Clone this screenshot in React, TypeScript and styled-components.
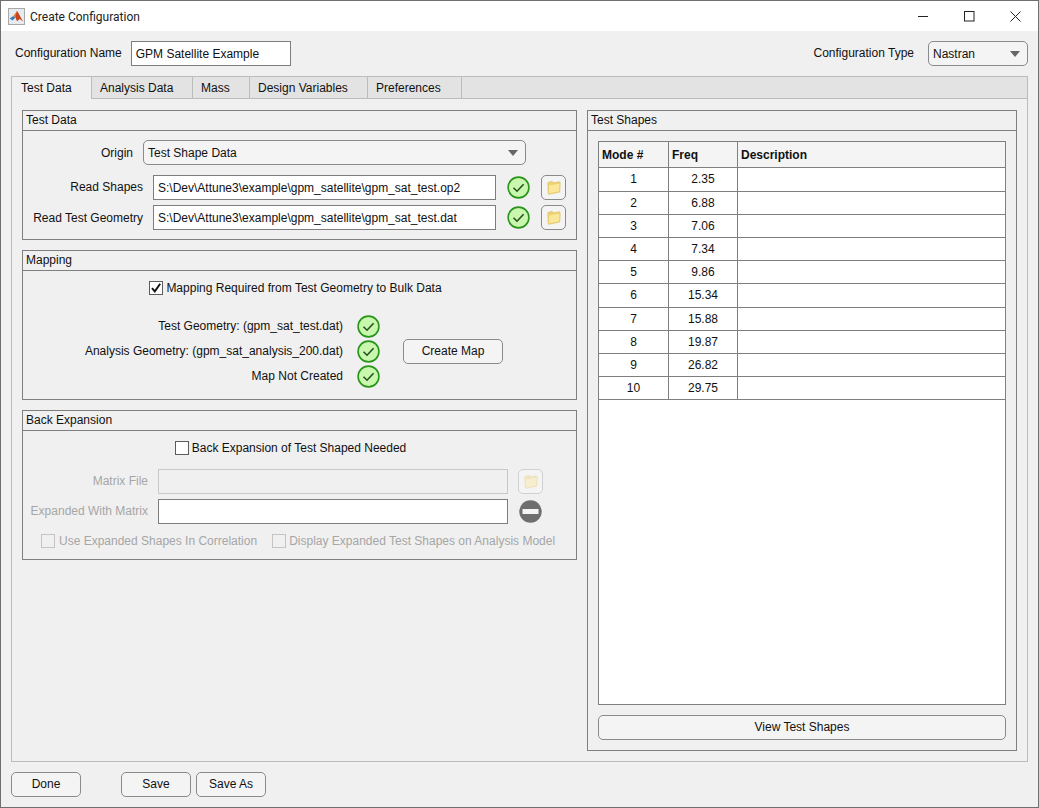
import React from "react";
import styled, { createGlobalStyle } from "styled-components";

const GlobalStyle = createGlobalStyle`
  html, body {
    margin: 0;
    padding: 0;
    background: #f0f0f0;
  }
  * {
    box-sizing: border-box;
  }
`;

const Window = styled.div`
  width: 1039px;
  height: 808px;
  border: 1px solid #6f6f6f;
  background: #f0f0f0;
  display: flex;
  flex-direction: column;
  font-family: "Liberation Sans", Arial, sans-serif;
  font-size: 12px;
  color: #111;
  overflow: hidden;
`;

const TitleBar = styled.div`
  height: 30px;
  flex: none;
  background: #fff;
  display: flex;
  align-items: center;
  padding-left: 7px;
  gap: 5px;
`;

const TitleText = styled.div`
  flex: 1;
  padding-top: 2px;
  font-family: Roboto, sans-serif;
  font-size: 12px;
  color: #222;
`;

const WinControls = styled.div`
  display: flex;
  height: 100%;
`;

const WinButton = styled.div`
  width: 46px;
  height: 100%;
  display: flex;
  align-items: center;
  justify-content: center;
`;

const Content = styled.div`
  flex: 1;
  display: flex;
  flex-direction: column;
  padding: 10px;
`;

const ConfigRow = styled.div`
  height: 25px;
  flex: none;
  display: flex;
  align-items: center;
  padding-left: 4px;
  margin-bottom: 10px;
`;

const ConfigLabel = styled.span<{ $gap: number }>`
  margin-right: ${(p) => p.$gap}px;
  padding-bottom: 2px;
  white-space: nowrap;
`;

const Spacer = styled.div`
  flex: 1;
`;

const TextField = styled.div<{ $width: number; $disabled?: boolean }>`
  width: ${(p) => p.$width}px;
  height: 25px;
  flex: none;
  border: 1px solid ${(p) => (p.$disabled ? "#c8c8c8" : "#7d7d7d")};
  background: ${(p) => (p.$disabled ? "#f0f0f0" : "#fff")};
  display: flex;
  align-items: center;
  padding-left: 4px;
  white-space: nowrap;
`;

const DropDown = styled.div<{ $width: number }>`
  width: ${(p) => p.$width}px;
  height: 25px;
  flex: none;
  border: 1px solid #8a8a8a;
  border-radius: 5px;
  background: #f4f4f4;
  display: flex;
  align-items: center;
  justify-content: space-between;
  padding: 0 5px 0 4px;
`;

const Caret = styled.span`
  width: 0;
  height: 0;
  margin-right: 2px;
  border-left: 5px solid transparent;
  border-right: 5px solid transparent;
  border-top: 6px solid #666;
`;

const TabGroup = styled.div`
  height: 686px;
  flex: none;
  border: 1px solid #bcbcbc;
  display: flex;
  flex-direction: column;
`;

const TabStrip = styled.div`
  height: 22px;
  flex: none;
  display: flex;
  background: #e3e3e3;
  border-bottom: 1px solid #bcbcbc;
`;

const Tab = styled.div<{ $width: number; $active?: boolean }>`
  width: ${(p) => p.$width}px;
  height: ${(p) => (p.$active ? "22px" : "21px")};
  flex: none;
  display: flex;
  align-items: center;
  padding-left: ${(p) => (p.$active ? 9 : 8)}px;
  background: ${(p) => (p.$active ? "#f0f0f0" : "transparent")};
  border-right: 1px solid #bcbcbc;
  position: relative;
  z-index: ${(p) => (p.$active ? 1 : 0)};
`;

const TabBody = styled.div`
  flex: 1;
  display: flex;
  gap: 10px;
  padding: 11px 10px 10px 10px;
`;

const LeftColumn = styled.div`
  width: 555px;
  flex: none;
  display: flex;
  flex-direction: column;
  gap: 10px;
`;

const Panel = styled.div<{ $height?: number; $fill?: boolean }>`
  border: 1px solid #7f7f7f;
  display: flex;
  flex-direction: column;
  ${(p) => (p.$height ? `height: ${p.$height}px;` : "")}
  ${(p) => (p.$fill ? "width: 430px; flex: none;" : "")}
`;

const PanelTitle = styled.div`
  height: 20px;
  flex: none;
  padding: 0 0 2px 3px;
  display: flex;
  align-items: center;
  border-bottom: 1px solid #7f7f7f;
`;

const PanelBody = styled.div<{ $top: number; $gap?: number }>`
  flex: 1;
  display: flex;
  flex-direction: column;
  padding-top: ${(p) => p.$top}px;
  gap: ${(p) => p.$gap ?? 0}px;
  min-height: 0;
`;

const FormRow = styled.div<{ $labelWidth: number; $after?: number }>`
  display: grid;
  grid-template-columns: ${(p) => p.$labelWidth}px auto auto auto;
  justify-content: start;
  align-items: center;
  height: 25px;
  margin-bottom: ${(p) => p.$after ?? 0}px;
`;

const FieldLabel = styled.div<{ $disabled?: boolean; $gap: number; $level?: boolean }>`
  text-align: right;
  padding-right: ${(p) => p.$gap}px;
  padding-bottom: ${(p) => (p.$level ? 0 : 2)}px;
  white-space: nowrap;
  color: ${(p) => (p.$disabled ? "#a6a6a6" : "inherit")};
`;

const StatusSlot = styled.div`
  width: 45px;
  height: 25px;
  display: flex;
  align-items: center;
  padding-left: 11px;
`;

const FieldGap = styled.div<{ $width: number }>`
  width: ${(p) => p.$width}px;
`;

const IconButton = styled.div<{ $disabled?: boolean }>`
  width: 25px;
  height: 25px;
  border: 1px solid ${(p) => (p.$disabled ? "#d0d0d0" : "#8a8a8a")};
  border-radius: 5px;
  background: #f4f4f4;
  display: flex;
  align-items: center;
  justify-content: center;
`;

const CenterRow = styled.div<{ $inset: number; $after?: number }>`
  height: 20px;
  display: flex;
  align-items: center;
  justify-content: center;
  gap: 3px;
  padding-right: ${(p) => p.$inset}px;
  margin-bottom: ${(p) => p.$after ?? 0}px;
`;

const CheckBox = styled.span<{ $disabled?: boolean }>`
  width: 14px;
  height: 14px;
  flex: none;
  border: 1px solid ${(p) => (p.$disabled ? "#c4c4c4" : "#5c5c5c")};
  background: ${(p) => (p.$disabled ? "#f0f0f0" : "#fff")};
  display: flex;
  align-items: center;
  justify-content: center;
`;

const MapArea = styled.div`
  display: flex;
  align-items: center;
  margin-top: 16px;
`;

const MapList = styled.div`
  display: flex;
  flex-direction: column;
`;

const MapRow = styled.div`
  width: 357px;
  height: 25px;
  display: grid;
  grid-template-columns: 320px 37px;
  align-items: center;
`;

const MapLabel = styled.div`
  text-align: right;
  white-space: nowrap;
  padding-bottom: 2px;
`;

const MapIcon = styled.div`
  display: flex;
  justify-content: flex-end;
`;

const PushButton = styled.div<{ $width?: number; $left?: number }>`
  width: ${(p) => (p.$width ? `${p.$width}px` : "auto")};
  height: 25px;
  flex: none;
  margin-left: ${(p) => p.$left ?? 0}px;
  padding-bottom: 2px;
  border: 1px solid #8a8a8a;
  border-radius: 5px;
  background: #f4f4f4;
  display: flex;
  align-items: center;
  justify-content: center;
`;

const OptionRow = styled.div`
  display: flex;
  align-items: center;
  height: 20px;
  margin-top: 2px;
  padding-left: 18px;
  color: #a6a6a6;
`;

const OptionLabel = styled.span<{ $gap: number; $lead: number }>`
  margin-left: ${(p) => p.$lead}px;
  margin-right: ${(p) => p.$gap}px;
  white-space: nowrap;
`;

const TableWrap = styled.div`
  flex: 1;
  margin: 10px 10px 0 10px;
  border: 1px solid #7f7f7f;
  background: #fff;
  display: flex;
  flex-direction: column;
  min-height: 0;
`;

const TableRow = styled.div<{ $head?: boolean }>`
  height: ${(p) => (p.$head ? "26.4px" : "23.2px")};
  flex: none;
  display: grid;
  grid-template-columns: 70px 69px 1fr;
  border-bottom: 1px solid #7f7f7f;
  background: ${(p) => (p.$head ? "#f4f4f4" : "#fff")};
  font-weight: ${(p) => (p.$head ? 700 : 400)};
`;

const TableCell = styled.div<{ $center?: boolean; $head?: boolean }>`
  display: flex;
  align-items: center;
  justify-content: ${(p) => (p.$center ? "center" : "flex-start")};
  padding-left: ${(p) => (p.$head ? 3 : 0)}px;
  padding-top: ${(p) => (p.$head ? 1 : 0)}px;
  border-right: 1px solid #7f7f7f;
  &:last-child {
    border-right: none;
  }
`;

const TableFooter = styled.div`
  padding: 10px;
  flex: none;
`;

const BottomBar = styled.div`
  flex: none;
  display: flex;
  margin-top: 10px;
`;

const TEST_SHAPES = [
  ["1", "2.35"],
  ["2", "6.88"],
  ["3", "7.06"],
  ["4", "7.34"],
  ["5", "9.86"],
  ["6", "15.34"],
  ["7", "15.88"],
  ["8", "19.87"],
  ["9", "26.82"],
  ["10", "29.75"],
];

const CheckCircle = () => (
  <svg width="23" height="23" viewBox="0 0 23 23">
    <circle cx="11.5" cy="11.5" r="10.4" fill="#c9f7ae" stroke="#2a941b" strokeWidth="1.6" />
    <path d="M6.5 11.8 L10 15.2 L16.6 8.2" fill="none" stroke="#24501d" strokeWidth="1.6" />
  </svg>
);

const FolderIcon = ({ faded }: { faded?: boolean }) => (
  <svg width="14" height="15" viewBox="0 0 14 15" opacity={faded ? 0.4 : 1}>
    <path
      d="M0.8 2.6 L5 1.2 L6.6 2.8 L12.2 1.8 Q13.2 1.8 13.2 2.8 L12.9 11.2 Q12.9 12 12.1 12.2 L2.2 14.3 Q1.2 14.4 1.2 13.4 Z"
      fill="#efd171"
      stroke="#d9bf6a"
      strokeWidth="0.6"
    />
    <path d="M1.9 5.4 L12.4 3.8 L12.1 11.2 L2.2 13.2 Z" fill="#fbe79a" />
  </svg>
);

const MinusCircle = () => (
  <svg width="23" height="23" viewBox="0 0 23 23">
    <circle cx="11.5" cy="11.5" r="11.2" fill="#6e6e6e" />
    <rect x="3.5" y="9" width="16" height="5" fill="#f4f4f4" />
  </svg>
);

const MatlabIcon = () => (
  <svg width="17" height="17" viewBox="0 0 17 17">
    <rect x="0.5" y="0.5" width="16" height="16" fill="#e6ebf0" stroke="#a8a8a8" />
    <path d="M1.6 10.4 L5.4 8 L7.4 9.6 L4.6 12.4 Z" fill="#3b7db8" />
    <path d="M5.4 8 L9 3 L11 6.4 L7.4 9.6 Z" fill="#e8782a" />
    <path d="M9 3 L11.2 6.4 L15 13.4 L11.8 11 L9 13.2 L7.4 9.6 Z" fill="#c8431c" />
  </svg>
);

const App: React.FC = () => {
  return (
    <Window>
      <GlobalStyle />
      <TitleBar>
        <MatlabIcon />
        <TitleText>Create Configuration</TitleText>
        <WinControls>
          <WinButton>
            <svg width="11" height="11" viewBox="0 0 11 11">
              <path d="M0 5.5 H10" stroke="#222" strokeWidth="1" />
            </svg>
          </WinButton>
          <WinButton>
            <svg width="11" height="11" viewBox="0 0 11 11">
              <rect x="0.5" y="0.5" width="9.5" height="9.5" fill="none" stroke="#222" />
            </svg>
          </WinButton>
          <WinButton>
            <svg width="11" height="11" viewBox="0 0 11 11">
              <path d="M0.5 0.5 L10.5 10.5 M10.5 0.5 L0.5 10.5" stroke="#222" />
            </svg>
          </WinButton>
        </WinControls>
      </TitleBar>
      <Content>
        <ConfigRow>
          <ConfigLabel $gap={9}>Configuration Name</ConfigLabel>
          <TextField $width={160}>GPM Satellite Example</TextField>
          <Spacer />
          <ConfigLabel $gap={14}>Configuration Type</ConfigLabel>
          <DropDown $width={100}>
            Nastran
            <Caret />
          </DropDown>
        </ConfigRow>
        <TabGroup>
          <TabStrip>
            <Tab $width={80} $active>Test Data</Tab>
            <Tab $width={101}>Analysis Data</Tab>
            <Tab $width={57}>Mass</Tab>
            <Tab $width={118}>Design Variables</Tab>
            <Tab $width={94}>Preferences</Tab>
          </TabStrip>
          <TabBody>
            <LeftColumn>
              <Panel $height={130}>
                <PanelTitle>Test Data</PanelTitle>
                <PanelBody $top={9} $gap={5}>
                  <FormRow $labelWidth={120} $after={5}>
                    <FieldLabel $gap={10} $level>Origin</FieldLabel>
                    <DropDown $width={383}>
                      Test Shape Data
                      <Caret />
                    </DropDown>
                  </FormRow>
                  <FormRow $labelWidth={130}>
                    <FieldLabel $gap={10}>Read Shapes</FieldLabel>
                    <TextField $width={343}>S:\Dev\Attune3\example\gpm_satellite\gpm_sat_test.op2</TextField>
                    <StatusSlot>
                      <CheckCircle />
                    </StatusSlot>
                    <IconButton>
                      <FolderIcon />
                    </IconButton>
                  </FormRow>
                  <FormRow $labelWidth={130}>
                    <FieldLabel $gap={10} $level>Read Test Geometry</FieldLabel>
                    <TextField $width={343}>S:\Dev\Attune3\example\gpm_satellite\gpm_sat_test.dat</TextField>
                    <StatusSlot>
                      <CheckCircle />
                    </StatusSlot>
                    <IconButton>
                      <FolderIcon />
                    </IconButton>
                  </FormRow>
                </PanelBody>
              </Panel>
              <Panel $height={150}>
                <PanelTitle>Mapping</PanelTitle>
                <PanelBody $top={7}>
                  <CenterRow $inset={8}>
                    <CheckBox>
                      <svg width="12" height="12" viewBox="0 0 12 12">
                        <path d="M2 6.2 L4.8 9.4 L10.2 1.8" fill="none" stroke="#111" strokeWidth="1.9" />
                      </svg>
                    </CheckBox>
                    Mapping Required from Test Geometry to Bulk Data
                  </CenterRow>
                  <MapArea>
                    <MapList>
                      <MapRow>
                        <MapLabel>Test Geometry: (gpm_sat_test.dat)</MapLabel>
                        <MapIcon>
                          <CheckCircle />
                        </MapIcon>
                      </MapRow>
                      <MapRow>
                        <MapLabel>Analysis Geometry: (gpm_sat_analysis_200.dat)</MapLabel>
                        <MapIcon>
                          <CheckCircle />
                        </MapIcon>
                      </MapRow>
                      <MapRow>
                        <MapLabel>Map Not Created</MapLabel>
                        <MapIcon>
                          <CheckCircle />
                        </MapIcon>
                      </MapRow>
                    </MapList>
                    <PushButton $width={100} $left={23}>Create Map</PushButton>
                  </MapArea>
                </PanelBody>
              </Panel>
              <Panel $height={150}>
                <PanelTitle>Back Expansion</PanelTitle>
                <PanelBody $top={7} $gap={5}>
                  <CenterRow $inset={18} $after={6}>
                    <CheckBox />
                    Back Expansion of Test Shaped Needed
                  </CenterRow>
                  <FormRow $labelWidth={135}>
                    <FieldLabel $gap={10} $disabled>Matrix File</FieldLabel>
                    <TextField $width={350} $disabled />
                    <FieldGap $width={10} />
                    <IconButton $disabled>
                      <FolderIcon faded />
                    </IconButton>
                  </FormRow>
                  <FormRow $labelWidth={135}>
                    <FieldLabel $gap={10} $disabled>Expanded With Matrix</FieldLabel>
                    <TextField $width={350} />
                    <FieldGap $width={11} />
                    <MinusCircle />
                  </FormRow>
                  <OptionRow>
                    <CheckBox $disabled />
                    <OptionLabel $lead={4} $gap={15}>Use Expanded Shapes In Correlation</OptionLabel>
                    <CheckBox $disabled />
                    <OptionLabel $lead={3} $gap={0}>Display Expanded Test Shapes on Analysis Model</OptionLabel>
                  </OptionRow>
                </PanelBody>
              </Panel>
            </LeftColumn>
            <Panel $fill>
              <PanelTitle>Test Shapes</PanelTitle>
              <TableWrap>
                <TableRow $head>
                  <TableCell $head>Mode #</TableCell>
                  <TableCell $head>Freq</TableCell>
                  <TableCell $head>Description</TableCell>
                </TableRow>
                {TEST_SHAPES.map(([mode, freq]) => (
                  <TableRow key={mode}>
                    <TableCell $center>{mode}</TableCell>
                    <TableCell $center>{freq}</TableCell>
                    <TableCell />
                  </TableRow>
                ))}
              </TableWrap>
              <TableFooter>
                <PushButton>View Test Shapes</PushButton>
              </TableFooter>
            </Panel>
          </TabBody>
        </TabGroup>
        <BottomBar>
          <PushButton $width={70}>Done</PushButton>
          <PushButton $width={70} $left={40}>Save</PushButton>
          <PushButton $width={70} $left={5}>Save As</PushButton>
        </BottomBar>
      </Content>
    </Window>
  );
};

export default App;
